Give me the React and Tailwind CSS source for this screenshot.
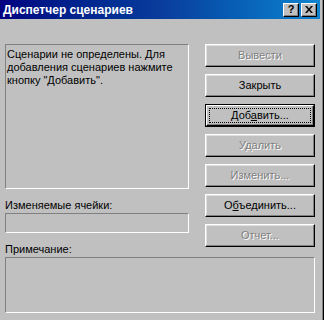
const font = "font-['Liberation_Sans',Arial,sans-serif]";

const Btn = ({ children, disabled, isDefault }) => {
  const label = (
    <span
      className={`text-[11px] leading-none ${
        disabled ? "text-[#808080] [text-shadow:1px_1px_0_#fff]" : "text-black"
      }`}
    >
      {children}
    </span>
  );

  if (isDefault) {
    return (
      <div className="h-[23px] border border-black">
        <div className="h-full border border-t-white border-l-white border-b-black border-r-black shadow-[inset_-1px_-1px_0_#808080] p-[2px]">
          <div className="h-full border border-dotted border-black flex items-center justify-center">
            {label}
          </div>
        </div>
      </div>
    );
  }

  return (
    <div className="h-[23px] border border-t-white border-l-white border-b-black border-r-black shadow-[inset_-1px_-1px_0_#808080,inset_1px_1px_0_#dfdfdf] flex items-center justify-center">
      {label}
    </div>
  );
};

const CapBtn = ({ children }) => (
  <div className="w-[16px] h-[14px] bg-[#c0c0c0] border border-t-white border-l-white border-b-black border-r-black shadow-[inset_-1px_-1px_0_#808080] flex items-center justify-center text-[11px] font-bold leading-none text-black">
    {children}
  </div>
);

const Sunken = ({ className }) => (
  <div
    className={`border border-t-[#808080] border-l-[#808080] border-b-white border-r-white ${className}`}
  />
);

export default function App() {
  return (
    <div className={`w-[324px] h-[320px] bg-[#c0c0c0] flex ${font}`}>
      <div className="flex-1 flex flex-col">
        {/* Title bar */}
        <div className="h-[19px] mr-[2px] bg-gradient-to-r from-[#000080] via-[#0a3c9c] to-[#1084d0] flex items-center pl-[3px] pr-[3px]">
          <span className="text-white text-[12px] font-bold leading-none flex-1">
            Диспетчер сценариев
          </span>
          <div className="flex gap-[2px]">
            <CapBtn>?</CapBtn>
            <CapBtn>
              <svg width="8" height="7" viewBox="0 0 8 7">
                <path d="M0 0h2l2 2.5L6 0h2L5 3.5 8 7H6L4 4.5 2 7H0l3-3.5z" fill="#000" />
              </svg>
            </CapBtn>
          </div>
        </div>

        {/* Body */}
        <div className="flex gap-[16px] pl-[5px] pt-[25px]">
          <div className="w-[184px] flex flex-col text-[11px] text-black">
            <div className="h-[145px] border border-t-[#808080] border-l-[#808080] border-b-white border-r-white px-[1px] pt-[3px] leading-[13px]">
              Сценарии не определены. Для добавления сценариев нажмите кнопку "Добавить".
            </div>
            <div className="mt-[10px] leading-[13px]">Изменяемые ячейки:</div>
            <Sunken className="mt-[1px] h-[20px]" />
            <div className="mt-[10px] leading-[13px]">Примечание:</div>
          </div>

          <div className="w-[110px] flex flex-col gap-[7px]">
            <Btn disabled>Вывести</Btn>
            <Btn>Закрыть</Btn>
            <Btn isDefault>
              Доб<u>а</u>вить...
            </Btn>
            <Btn disabled>Удалить</Btn>
            <Btn disabled>Изменить...</Btn>
            <Btn>
              О<u>б</u>ъединить...
            </Btn>
            <Btn disabled>Отчет...</Btn>
          </div>
        </div>

        <div className="pl-[5px] mt-[1px]">
          <Sunken className="w-[310px] h-[56px]" />
        </div>
      </div>
      <div className="w-px bg-[#808080]" />
      <div className="w-px bg-black" />
    </div>
  );
}
